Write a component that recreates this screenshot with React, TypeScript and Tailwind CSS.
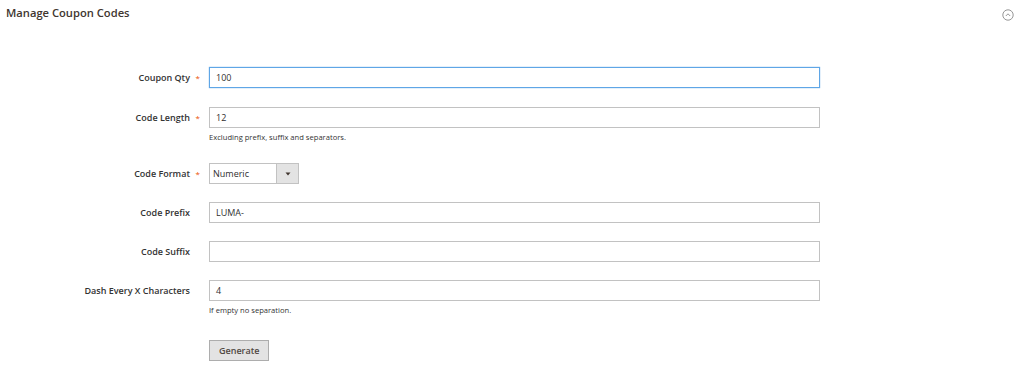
import React from "react";

const font = { fontFamily: '"Open Sans", "Liberation Sans", sans-serif' };

type RowProps = {
  label: string;
  required?: boolean;
  children: React.ReactNode;
  note?: string;
  className?: string;
};

const Row = ({ label, required, children, note, className }: RowProps) => (
  <div className={`flex ${className ?? ""}`}>
    <div className="w-[209px] shrink-0 flex justify-end items-start pt-[5px] pr-[9px]">
      <span className="text-[9px] leading-[12px] font-semibold text-[#333]">{label}</span>
      <span className="w-[10px] text-right text-[8px] leading-[12px] text-[#eb5202]">{required ? "*" : ""}</span>
    </div>
    <div className="flex flex-col">
      {children}
      {note && <div className="mt-[4px] text-[7.6px] leading-[11px] text-[#333]">{note}</div>}
    </div>
  </div>
);

const TextInput = ({ value, focused }: { value: string; focused?: boolean }) => (
  <div
    className={`w-[611px] h-[21px] bg-white border flex items-center px-[6px] text-[9px] text-[#303030] ${
      focused ? "border-[#5fa6e6] shadow-[0_0_1px_#5fa6e6]" : "border-[#c2c2c2]"
    }`}
  >
    {value}
  </div>
);

export default function App() {
  return (
    <div className="w-[1024px] h-[371px] bg-white relative overflow-hidden" style={font}>
      <div className="flex justify-between items-center pl-[6px] pr-[10px] pt-[5px]">
        <h2 className="text-[11.2px] leading-[16px] font-semibold text-[#41362f]">Manage Coupon Codes</h2>
        <svg width="12" height="12" viewBox="0 0 12 12" className="mt-[3px]">
          <circle cx="6" cy="6" r="5.2" fill="none" stroke="#8a8a8a" strokeWidth="0.9" />
          <path d="M3.8 7 L6 4.8 L8.2 7" fill="none" stroke="#8a8a8a" strokeWidth="0.9" />
        </svg>
      </div>

      <div className="mt-[46px] flex flex-col">
        <Row label="Coupon Qty" required className="mb-[19px]">
          <TextInput value="100" focused />
        </Row>
        <Row label="Code Length" required note="Excluding prefix, suffix and separators." className="mb-[20px]">
          <TextInput value="12" />
        </Row>
        <Row label="Code Format" required className="mb-[18px]">
          <div className="flex w-[90px] h-[21px] border border-[#c2c2c2] bg-white">
            <div className="flex-1 flex items-center px-[3px] text-[9px] text-[#303030]">Numeric</div>
            <div className="w-[22px] bg-[#e3e3e3] border-l border-[#c2c2c2] flex items-center justify-center">
              <svg width="6" height="4" viewBox="0 0 6 4">
                <path d="M0.5 0.5 L5.5 0.5 L3 3.5 Z" fill="#41362f" />
              </svg>
            </div>
          </div>
        </Row>
        <Row label="Code Prefix" className="mb-[18px]">
          <TextInput value="LUMA-" />
        </Row>
        <Row label="Code Suffix" className="mb-[18px]">
          <TextInput value="" />
        </Row>
        <Row label="Dash Every X Characters" note="If empty no separation." className="mb-[24px]">
          <TextInput value="4" />
        </Row>
        <div className="flex pl-[209px]">
          <button className="h-[21px] px-[9px] bg-[#e3e3e3] border border-[#adadad] text-[9px] font-semibold text-[#514943]">
            Generate
          </button>
        </div>
      </div>
    </div>
  );
}
